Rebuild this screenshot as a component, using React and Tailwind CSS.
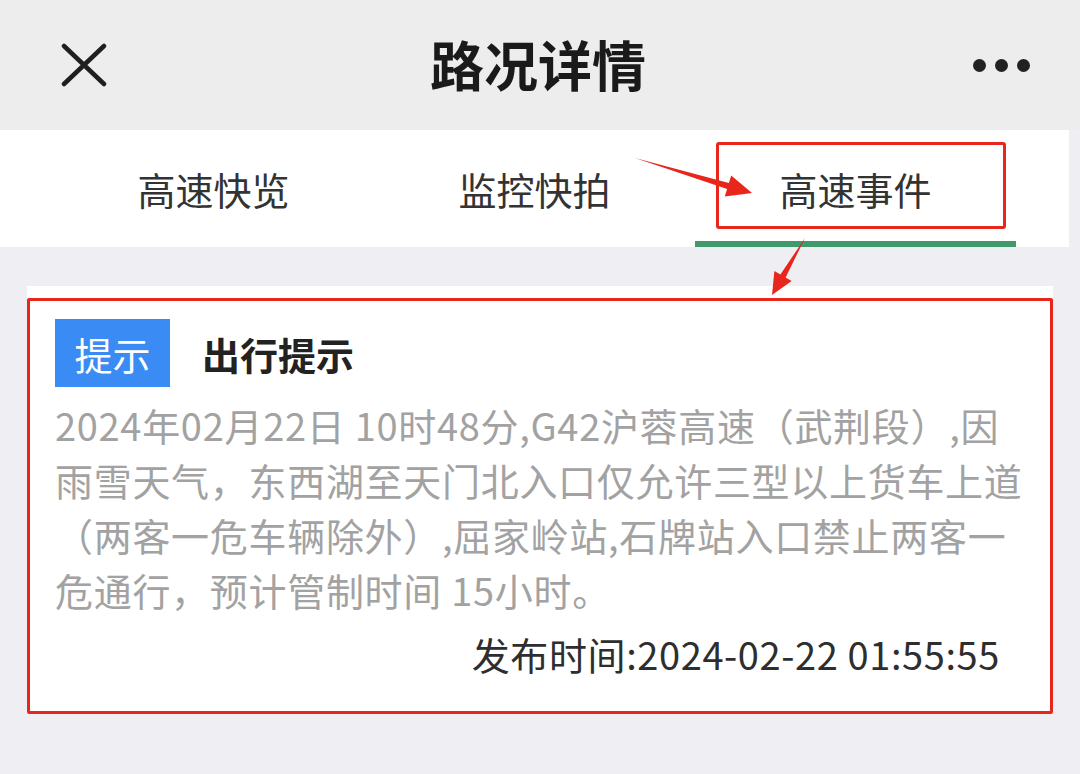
import React from 'react';

const font = "font-['Noto_Sans_CJK_SC','Noto_Sans',sans-serif]";

const bodyLines = [
  '2024年02月22日 10时48分,G42沪蓉高速（武荆段）,因',
  '雨雪天气，东西湖至天门北入口仅允许三型以上货车上道',
  '（两客一危车辆除外）,屈家岭站,石牌站入口禁止两客一',
  '危通行，预计管制时间 15小时。',
];

export default function App() {
  return (
    <div className={`relative w-[1080px] h-[774px] overflow-hidden bg-[#efeff3] ${font}`}>
      {/* Top bar */}
      <div className="h-[130px] bg-[#ededed] flex items-center justify-between pl-[60px] pr-[27px]">
        <svg width="46" height="44" viewBox="0 0 46 44" className="ml-[1px]">
          <path d="M3 3 L43 41 M43 3 L3 41" stroke="#1f1f1f" strokeWidth="4.5" strokeLinecap="round" />
        </svg>
        <h1 className="text-[54px] font-bold text-[#1a1a1a] leading-none -mt-[2px] -ml-[4px]">路况详情</h1>
        <div className="flex items-center gap-[9px] w-[80px]">
          <span className="w-[13px] h-[13px] rounded-full bg-[#222]" />
          <span className="w-[13px] h-[13px] rounded-full bg-[#222]" />
          <span className="w-[13px] h-[13px] rounded-full bg-[#222]" />
        </div>
      </div>

      {/* Tabs */}
      <div className="h-[117px] bg-white grid grid-cols-3 px-[53px] w-[1069px]">
        <div className="flex items-center justify-center text-[38px] text-[#333]">高速快览</div>
        <div className="flex items-center justify-center text-[38px] text-[#333]">监控快拍</div>
        <div className="relative flex items-center justify-center text-[38px] text-[#333]">
          高速事件
          <div className="absolute left-0 right-0 bottom-0 h-[6px] bg-[#3e9a6b]" />
        </div>
      </div>

      {/* Card */}
      <div className="mt-[39px] mx-[27px] bg-white pt-[12px]">
        <div className="border-[3px] border-[#e8261c] rounded-[2px] pl-[25px] pr-[50px] pt-[18px] pb-[30px]">
          <div className="flex items-center">
            <div className="w-[115px] h-[68px] bg-[#3a8cf4] text-white text-[38px] flex items-center justify-center">提示</div>
            <div className="ml-[32px] text-[38px] font-bold text-[#222]">出行提示</div>
          </div>
          <div className="mt-[10px] text-[38px] leading-[55px] text-[#a2a2a2] tracking-[0.7px]">
            {bodyLines.map((l) => (
              <div key={l} className="whitespace-nowrap">{l}</div>
            ))}
          </div>
          <div className="mt-[9px] text-right text-[38px] leading-[55px] text-[#2e2e2e] tracking-[0.6px]">
            发布时间:2024-02-22 01:55:55
          </div>
        </div>
      </div>

      {/* Annotations */}
      <div className="absolute left-[716px] top-[142px] w-[290px] h-[87px] border-[3px] border-[#e8261c] rounded-[3px] pointer-events-none" />
      <svg className="absolute left-0 top-0 pointer-events-none" width="1080" height="774">
        <polygon
          fill="#e8261c"
          points="635,158 728.9,183.1 731.2,175.5 752,193 724.8,196.5 727.1,188.9"
        />
        <polygon
          fill="#e8261c"
          points="805,238 785.6,277.5 791.6,281 772,295 774.4,271 780.4,274.5"
        />
      </svg>
    </div>
  );
}
